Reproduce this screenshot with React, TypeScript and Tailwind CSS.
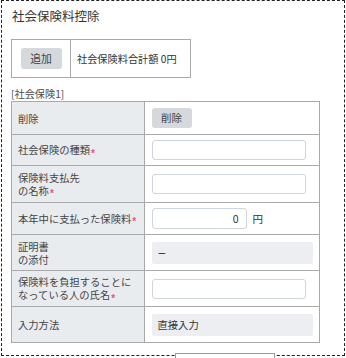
import React from "react";

type Row = {
  label: React.ReactNode;
  required?: boolean;
  h: string;
  kind: "button" | "input" | "yen" | "readonly";
  value?: string;
};

const rows: Row[] = [
  { label: "削除", h: "h-[32px]", kind: "button" },
  { label: "社会保険の種類", required: true, h: "h-[31px]", kind: "input" },
  {
    label: (
      <>
        保険料支払先
        <br />
        の名称
      </>
    ),
    required: true,
    h: "h-[37px]",
    kind: "input",
  },
  { label: "本年中に支払った保険料", required: true, h: "h-[32px]", kind: "yen" },
  {
    label: (
      <>
        証明書
        <br />
        の添付
      </>
    ),
    h: "h-[36px]",
    kind: "readonly",
    value: "–",
  },
  {
    label: (
      <>
        保険料を負担することに
        <br />
        なっている人の氏名
      </>
    ),
    required: true,
    h: "h-[36px]",
    kind: "input",
  },
  { label: "入力方法", h: "h-[36px]", kind: "readonly", value: "直接入力" },
];

const Req = () => (
  <span className="ml-[1px] inline-block translate-y-[2px] align-middle font-['Liberation_Sans',sans-serif] text-[10px] font-bold leading-none text-[#ef4f8a]">
    *
  </span>
);

const ValueCell = ({ row }: { row: Row }) => {
  if (row.kind === "button") {
    return (
      <button className="h-[20px] w-[40px] rounded-[3px] bg-[#d5d8dc] text-[10.5px] text-[#444]">
        削除
      </button>
    );
  }
  if (row.kind === "input") {
    return (
      <input
        type="text"
        className="h-[20px] w-[154px] rounded-[3px] border border-[#cfd5de] bg-white outline-none"
      />
    );
  }
  if (row.kind === "yen") {
    return (
      <div className="flex items-center gap-[6px]">
        <input
          type="text"
          defaultValue="0"
          className="h-[21px] w-[95px] rounded-[3px] border border-[#cfd5de] bg-white pr-[7px] text-right text-[10.5px] text-[#333] outline-none"
        />
        <span className="text-[10.5px] text-[#333]">円</span>
      </div>
    );
  }
  return (
    <div className="flex h-[22px] w-[161px] items-center rounded-[2px] bg-[#eceef1] pl-[6px] text-[10.3px] text-[#333]">
      {row.value === "–" ? (
        <span className="pl-[1px] font-['Liberation_Sans',sans-serif] text-[12px]">–</span>
      ) : (
        row.value
      )}
    </div>
  );
};

export default function App() {
  return (
    <div className="relative h-[358px] w-[346px] overflow-hidden bg-white font-['Noto_Sans_CJK_JP',sans-serif] text-[#333]">
      <div className="ml-[1px] h-[356px] w-[344px] border border-dashed border-[#222] pl-[9px] pt-[7px]">
        <div className="ml-[1px] text-[12.5px] leading-[15px]">社会保険料控除</div>

        {/* 合計 */}
        <div className="mt-[16px] flex h-[39px] w-[180px] border border-[#a9a9a9]">
          <div className="flex w-[59px] items-center justify-center border-r border-[#a9a9a9]">
            <button className="h-[21px] w-[41px] rounded-[3px] bg-[#d5d8dc] text-[10.8px] text-[#444]">
              追加
            </button>
          </div>
          <div className="flex flex-1 items-center pl-[6px] text-[10.2px]">
            社会保険料合計額 0円
          </div>
        </div>

        <div className="mt-[10px] text-[10.2px] leading-[12px] text-[#4a4a4a]">[社会保険1]</div>

        {/* 明細 */}
        <div className="mt-[1px] w-[309px] border border-[#a9a9a9]">
          {rows.map((row, i) => (
            <div
              key={i}
              className={`flex ${row.h} ${i > 0 ? "border-t border-[#a9a9a9]" : ""}`}
            >
              <div className="flex w-[133px] items-center border-r border-[#a9a9a9] bg-[#e9ecef] pl-[6px] text-[10.3px] leading-[13px] text-[#444]">
                <div>
                  {row.label}
                  {row.required && <Req />}
                </div>
              </div>
              <div className="flex flex-1 items-center pl-[6.5px]">
                <ValueCell row={row} />
              </div>
            </div>
          ))}
        </div>
      </div>

      <div className="absolute left-[175px] top-[353px] h-[20px] w-[100px] border border-[#9a9a9a] bg-white" />
    </div>
  );
}
